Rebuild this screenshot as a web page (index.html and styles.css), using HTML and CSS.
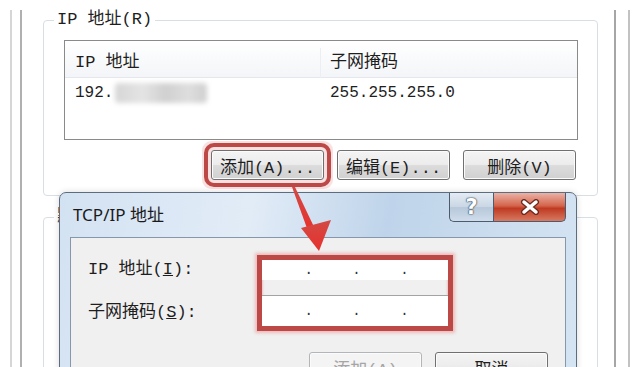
FILE: index.html
```html
<!DOCTYPE html>
<html lang="zh-CN">

<head>
    <meta charset="utf-8">
    <title>IP 地址</title>
    <link rel="stylesheet" href="styles.css">
</head>

<body>
    <div class="page">
        <div class="window">
            <div class="panel">

                <fieldset class="gruppe">
                    <legend>IP 地址(R)</legend>

                    <div class="liste">
                        <div class="hoved">
                            <span>IP 地址</span>
                            <span class="kol2">子网掩码</span>
                        </div>
                        <div class="raekke">
                            <span class="tal">192.<i class="sloer"></i></span>
                            <span class="tal kol2">255.255.255.0</span>
                        </div>
                    </div>

                    <div class="knapper">
                        <button class="knap markeret">添加(A)...</button>
                        <button class="knap">编辑(E)...</button>
                        <button class="knap">删除(V)</button>
                    </div>
                </fieldset>

                <fieldset class="gruppe nederst">
                    <legend>默</legend>
                </fieldset>

            </div>
        </div>

        <!-- dialogen ligger oven på vinduet -->
        <div class="dialog">
            <div class="titel">
                <span class="titeltekst">TCP/IP 地址</span>
                <div class="titelknapper">
                    <span class="hjaelp">?</span>
                    <span class="luk">
                        <svg width="22" height="16" viewBox="0 0 22 16">
                            <path d="M5 3 L17 13 M17 3 L5 13" stroke="#6b2a20" stroke-width="6" stroke-linecap="round" fill="none" />
                            <path d="M5 3 L17 13 M17 3 L5 13" stroke="#fff" stroke-width="3.5" stroke-linecap="round" fill="none" />
                        </svg>
                    </span>
                </div>
            </div>

            <div class="klient">
                <div class="formular">
                    <div class="etiketter">
                        <span>IP 地址(<u>I</u>):</span>
                        <span>子网掩码(<u>S</u>):</span>
                    </div>
                    <div class="ipboks">
                        <div class="felt foerste">
                            <span class="del"></span>.<span class="del"></span>.<span class="del"></span>.<span class="del"></span>
                        </div>
                        <div class="felt anden">
                            <span class="del"></span>.<span class="del"></span>.<span class="del"></span>.<span class="del"></span>
                        </div>
                    </div>
                </div>

                <div class="dialogknapper">
                    <button class="knap slukket">添加(A)</button>
                    <button class="knap">取消</button>
                </div>
            </div>
        </div>

        <svg class="pil" width="640" height="367" viewBox="0 0 640 367">
            <defs>
                <linearGradient id="rod" x1="0" y1="0" x2="0" y2="1">
                    <stop offset="0" stop-color="#d24a45" />
                    <stop offset="1" stop-color="#e8302c" />
                </linearGradient>
            </defs>
            <polygon points="292,187 295,187 315,229 308,231" fill="url(#rod)" />
            <polygon points="301,228 331,220 319,251" fill="url(#rod)" />
        </svg>
    </div>
</body>

</html>
```

FILE: styles.css
```css
body {
    margin: 0;
    background-color: #fff;
}

.page {
    position: relative;
    width: 640px;
    height: 367px;
    overflow: hidden;
    font-family: "Liberation Mono", "Noto Sans CJK SC", monospace;
    font-size: 17px;
    color: #1e1e1e;
}

.window {
    margin: 0 10px;
    height: 367px;
    box-sizing: border-box;
    border-left: 2px solid #d6d6d6;
    border-right: 2px solid #c2c2c2;
}

.panel {
    margin: 0 12px 0 8px;
    height: 100%;
    box-sizing: border-box;
    border-left: 2px solid #b0b0b0;
    border-right: 2px solid #a6a6a6;
}

.gruppe {
    margin: 10px 16px 0 21px;
    padding: 0 0 15px 0;
    border: 1px solid #d8dfe4;
    border-radius: 4px;
}

.gruppe legend {
    margin-left: 10px;
    padding: 0 3px;
    line-height: 20px;
    height: 20px;
}

.nederst {
    margin-top: 11px;
    height: 200px;
}

.liste {
    margin: 10px 19px 0 20px;
    height: 100px;
    box-sizing: border-box;
    border: 1px solid #8a8a8a;
    background-color: #fff;
}

.hoved,
.raekke {
    display: grid;
    grid-template-columns: 255px 1fr;
}

.hoved {
    height: 37px;
    box-sizing: border-box;
    padding-top: 7px;
    line-height: 30px;
    background: linear-gradient(#ffffff, #f3f5f8);
    border-bottom: 1px solid #e4e8ed;
}

.hoved span,
.raekke span {
    padding-left: 10px;
}

.hoved .kol2 {
    border-left: 1px solid #eceef1;
    padding-left: 9px;
}

.raekke {
    height: 30px;
    line-height: 30px;
}

.tal {
    font-size: 16px;
}

.sloer {
    display: inline-block;
    vertical-align: middle;
    width: 92px;
    height: 20px;
    margin-left: 2px;
    background: linear-gradient(90deg, #d6d6d6, #e4e4e4 30%, #d0d0d0 55%, #dedede 80%, #cfcfcf);
    border-radius: 4px;
    filter: blur(2.5px);
}

.knapper {
    display: flex;
    justify-content: flex-end;
    gap: 13px;
    margin-top: 10px;
    padding-right: 21px;
}

.knap {
    width: 113px;
    height: 30px;
    padding: 0;
    font-family: "Liberation Mono", "Noto Sans CJK SC", monospace;
    font-size: 17px;
    color: #1e1e1e;
    border: 1px solid #707070;
    border-radius: 3px;
    background: linear-gradient(#f4f4f4 0, #ececec 48%, #dcdcdc 52%, #d0d0d0 100%);
    box-shadow: inset 0 0 0 1px #fbfbfb;
}

.markeret {
    outline: 4px solid #bd4947;
    outline-offset: 3px;
    box-shadow: inset 0 0 0 1px #fbfbfb, 0 0 0 9px rgba(240, 170, 170, 0.35);
}

/* dialog */

.dialog {
    position: absolute;
    left: 59px;
    top: 192px;
    width: 518px;
    height: 220px;
    box-sizing: border-box;
    padding: 0 10px;
    border: 1px solid #5d6c7e;
    border-radius: 7px 7px 0 0;
    background: linear-gradient(100deg, #d3e2f2 0%, #e2ecf7 35%, #bfd4ea 60%, #d6e5f3 100%);
    box-shadow: 0 0 6px rgba(0, 0, 0, 0.15);
}

.titel {
    display: flex;
    height: 44px;
}

.titeltekst {
    padding: 11px 0 0 3px;
    font-family: "Noto Sans", "Noto Sans CJK SC", sans-serif;
    font-size: 17px;
    line-height: 22px;
    color: #1a1a1a;
}

.titelknapper {
    display: flex;
    margin-left: auto;
    height: 29px;
}

.hjaelp,
.luk {
    display: flex;
    align-items: center;
    justify-content: center;
    box-sizing: border-box;
    border: 1px solid #4c5b6d;
    border-top: none;
}

.hjaelp {
    width: 44px;
    border-radius: 0 0 0 5px;
    border-right: none;
    background: linear-gradient(#e4ecf4, #c9d6e4 50%, #b7c8da 52%, #cfdceb);
    font-family: "DejaVu Sans", sans-serif;
    font-weight: bold;
    font-size: 21px;
    color: #fff;
    text-shadow: 0 0 1px #3d4a5a, 0 0 1px #3d4a5a, 0 0 2px #3d4a5a;
}

.luk {
    width: 73px;
    border-radius: 0 0 5px 0;
    background: linear-gradient(#eab3a6, #d5654d 45%, #c03a22 55%, #d77b62);
}

.klient {
    height: 200px;
    box-sizing: border-box;
    border: 1px solid #8797ab;
    background-color: #f0f0f0;
}

.formular {
    display: flex;
    padding-top: 17px;
}

.etiketter {
    display: flex;
    flex-direction: column;
    gap: 23px;
    width: 186px;
    box-sizing: border-box;
    padding: 5px 0 0 17px;
}

.etiketter span {
    height: 20px;
    line-height: 20px;
}

.ipboks {
    width: 196px;
    box-sizing: border-box;
    border: 5px solid #bd4947;
    box-shadow: 0 0 3px 2px rgba(235, 150, 150, 0.6), inset 0 0 2px 1px rgba(235, 150, 150, 0.5);
}

.felt {
    display: flex;
    align-items: center;
    padding-left: 3px;
    background-color: #fff;
    font-size: 14px;
    color: #333;
}

.foerste {
    height: 20px;
    margin-bottom: 15px;
}

.anden {
    height: 31px;
    box-sizing: border-box;
    border-top: 1px solid #a3a3a3;
}

.del {
    width: 45px;
}

.dialogknapper {
    display: flex;
    justify-content: flex-end;
    gap: 13px;
    margin-top: 21px;
    padding-right: 17px;
}

.slukket {
    color: #a5a5a5;
    border-color: #b3b6b9;
    background: #f4f4f4;
}

.pil {
    position: absolute;
    left: 0;
    top: 0;
}
```
